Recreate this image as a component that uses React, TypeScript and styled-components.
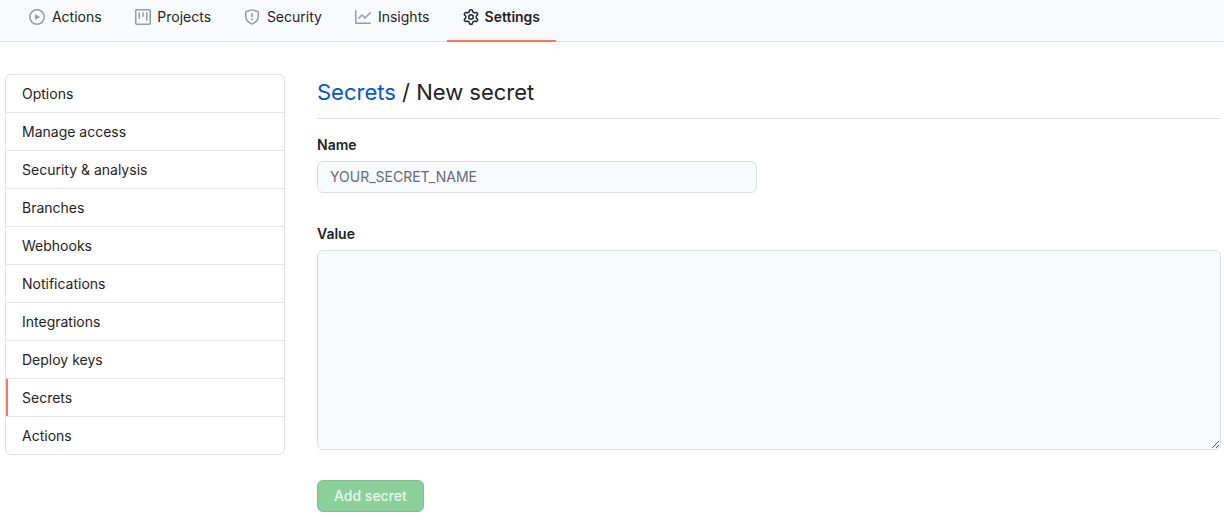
import React from "react";
import styled, { createGlobalStyle } from "styled-components";

const GlobalStyle = createGlobalStyle`
  *, *::before, *::after { box-sizing: border-box; }
  body {
    margin: 0;
    background: #ffffff;
    color: #1f2327;
    font-family: Inter, "Liberation Sans", sans-serif;
    font-size: 14px;
    line-height: 20px;
  }
`;

const icons = {
  play: "M1.5 8a6.5 6.5 0 1113 0 6.5 6.5 0 01-13 0zM8 0a8 8 0 100 16A8 8 0 008 0zM6.379 5.227A.25.25 0 006 5.442v5.117a.25.25 0 00.379.214l4.264-2.559a.25.25 0 000-.428L6.379 5.227z",
  project:
    "M1.75 0A1.75 1.75 0 000 1.75v12.5C0 15.216.784 16 1.75 16h12.5A1.75 1.75 0 0016 14.25V1.75A1.75 1.75 0 0014.25 0H1.75zM1.5 1.75a.25.25 0 01.25-.25h12.5a.25.25 0 01.25.25v12.5a.25.25 0 01-.25.25H1.75a.25.25 0 01-.25-.25V1.75zM11.75 3a.75.75 0 00-.75.75v7.5a.75.75 0 001.5 0v-7.5a.75.75 0 00-.75-.75zm-8.25.75a.75.75 0 011.5 0v5.5a.75.75 0 01-1.5 0v-5.5zM8 3a.75.75 0 00-.75.75v3.5a.75.75 0 001.5 0v-3.5A.75.75 0 008 3z",
  shield:
    "M7.467.133a1.75 1.75 0 011.066 0l5.25 1.68A1.75 1.75 0 0115 3.48V7c0 1.566-.32 3.182-1.303 4.682-.983 1.498-2.585 2.813-5.032 3.855a1.7 1.7 0 01-1.33 0c-2.447-1.042-4.049-2.357-5.032-3.855C1.32 10.182 1 8.566 1 7V3.48a1.75 1.75 0 011.217-1.667l5.25-1.68zm.61 1.429a.25.25 0 00-.153 0l-5.25 1.68a.25.25 0 00-.174.238V7c0 1.358.275 2.666 1.057 3.86.784 1.194 2.121 2.34 4.366 3.297a.2.2 0 00.154 0c2.245-.956 3.582-2.104 4.366-3.298C13.225 9.666 13.5 8.36 13.5 7V3.48a.25.25 0 00-.174-.237l-5.25-1.68zM9 10.5a1 1 0 11-2 0 1 1 0 012 0zm-.25-5.75a.75.75 0 10-1.5 0v3a.75.75 0 001.5 0v-3z",
  graph:
    "M1.5 1.75a.75.75 0 00-1.5 0v12.5c0 .414.336.75.75.75h14.5a.75.75 0 000-1.5H1.5V1.75zm14.28 2.53a.75.75 0 00-1.06-1.06L10 7.94 7.53 5.47a.75.75 0 00-1.06 0L3.22 8.72a.75.75 0 001.06 1.06L7 7.06l2.47 2.47a.75.75 0 001.06 0l5.25-5.25z",
  gear: "M7.429 1.525a6.593 6.593 0 011.142 0c.036.003.108.036.137.146l.289 1.105c.147.56.55.967.997 1.189.174.086.341.183.501.29.417.278.97.423 1.53.27l1.102-.303c.11-.03.175.016.195.046.219.31.41.641.573.989.014.031.022.11-.059.19l-.815.806c-.411.406-.562.957-.53 1.456a4.588 4.588 0 010 .582c-.032.499.119 1.05.53 1.456l.815.806c.08.08.073.159.059.19a6.494 6.494 0 01-.573.99c-.02.029-.086.074-.195.045l-1.103-.303c-.559-.153-1.112-.008-1.529.27-.16.107-.327.204-.5.29-.449.222-.851.628-.998 1.189l-.289 1.105c-.029.11-.101.143-.137.146a6.613 6.613 0 01-1.142 0c-.036-.003-.108-.037-.137-.146l-.289-1.105c-.147-.56-.55-.967-.997-1.189a4.502 4.502 0 01-.501-.29c-.417-.278-.97-.423-1.53-.27l-1.102.303c-.11.03-.175-.016-.195-.046a6.492 6.492 0 01-.573-.989c-.014-.031-.022-.11.059-.19l.815-.806c.411-.406.562-.957.53-1.456a4.587 4.587 0 010-.582c.032-.499-.119-1.05-.53-1.456l-.815-.806c-.08-.08-.073-.159-.059-.19a6.44 6.44 0 01.573-.99c.02-.029.086-.075.195-.045l1.103.303c.559.153 1.112.008 1.529-.27.16-.107.327-.204.5-.29.449-.222.851-.628.998-1.189l.289-1.105c.029-.11.101-.143.137-.146zM8 0c-.236 0-.47.01-.701.03-.743.065-1.29.615-1.458 1.261l-.29 1.106c-.017.066-.078.158-.211.224a5.994 5.994 0 00-.668.386c-.123.082-.233.09-.3.071L3.27 2.776c-.644-.177-1.392.02-1.82.63a7.977 7.977 0 00-.704 1.217c-.315.675-.111 1.422.363 1.891l.815.806c.05.048.098.147.088.294a6.084 6.084 0 000 .772c.01.147-.038.246-.088.294l-.815.806c-.474.469-.678 1.216-.363 1.891.2.428.436.835.704 1.218.428.609 1.176.806 1.82.63l1.103-.303c.066-.019.176-.011.299.071.213.143.436.272.668.386.133.066.194.158.212.224l.289 1.106c.169.646.715 1.196 1.458 1.26a8.094 8.094 0 001.402 0c.743-.064 1.29-.614 1.458-1.26l.29-1.106c.017-.066.078-.158.211-.224a5.98 5.98 0 00.668-.386c.123-.082.233-.09.3-.071l1.102.302c.644.177 1.392-.02 1.82-.63.268-.382.505-.789.704-1.217.315-.675.111-1.422-.364-1.891l-.814-.806c-.05-.048-.098-.147-.088-.294a6.1 6.1 0 000-.772c-.01-.147.039-.246.088-.294l.814-.806c.475-.469.679-1.216.364-1.891a7.992 7.992 0 00-.704-1.218c-.428-.609-1.176-.806-1.82-.63l-1.103.303c-.066.019-.176.011-.299-.071a5.991 5.991 0 00-.668-.386c-.133-.066-.194-.158-.212-.224L10.16 1.29C9.99.645 9.444.095 8.701.031A8.094 8.094 0 008 0zm1.5 8a1.5 1.5 0 11-3 0 1.5 1.5 0 013 0zM11 8a3 3 0 11-6 0 3 3 0 016 0z",
};

const TabBar = styled.nav`
  display: flex;
  padding-left: 13px;
  background: #f9fafc;
  box-shadow: inset 0 -1px 0 #dcdfe4;
`;

const Tab = styled.a<{ $active?: boolean }>`
  display: flex;
  align-items: center;
  gap: 6px;
  padding: 7px 16px 13px;
  border-bottom: 2px solid ${(p) => (p.$active ? "#f4775f" : "transparent")};
  color: inherit;
  font-weight: ${(p) => (p.$active ? 600 : 400)};
  text-decoration: none;
  white-space: nowrap;
`;

/* Reserves the width of the bold label, so that tabs keep their place when selected. */
const TabLabel = styled.span`
  display: flex;
  flex-direction: column;
  align-items: center;

  &::after {
    content: attr(data-label);
    height: 0;
    overflow: hidden;
    visibility: hidden;
    font-weight: 600;
  }
`;

const TabIcon = styled.svg<{ $active?: boolean }>`
  flex: none;
  width: 16px;
  height: 16px;
  fill: ${(p) => (p.$active ? "#24292e" : "#959da5")};
`;

const Page = styled.div`
  display: flex;
  align-items: flex-start;
  gap: 32px;
  padding: 32px 3px 10px 5px;
`;

const Menu = styled.nav`
  flex: none;
  width: 280px;
  overflow: hidden;
  border: 1px solid #dfe1e7;
  border-radius: 6px;
`;

const MenuItem = styled.a<{ $active?: boolean }>`
  display: block;
  padding: 9px 16px 8px;
  border-bottom: 1px solid #e4e6ea;
  box-shadow: ${(p) => (p.$active ? "inset 2px 0 0 #f4775f" : "none")};
  color: inherit;
  text-decoration: none;

  &:last-child {
    border-bottom: 0;
  }
`;

const Content = styled.main`
  flex: 1;
  min-width: 0;
`;

const Title = styled.h2`
  margin: 0 0 16px;
  padding: 2px 0 9px;
  border-bottom: 1px solid #dcdfe4;
  font-size: 22px;
  font-weight: 400;
  line-height: 33px;
`;

const TitleLink = styled.a`
  color: #0059d2;
  text-decoration: none;
`;

const Form = styled.form`
  display: flex;
  flex-direction: column;
  align-items: flex-start;
  gap: 30px;
`;

const Field = styled.div`
  display: flex;
  flex-direction: column;
  align-items: flex-start;
  gap: 6px;
  width: 100%;
`;

const Label = styled.label`
  font-weight: 600;
`;

const controlStyle = `
  border: 1px solid #dcdfe4;
  border-radius: 6px;
  background: #f9fafc;
  color: inherit;
  font: inherit;
`;

const TextInput = styled.input`
  ${controlStyle}
  width: 440px;
  max-width: 100%;
  height: 32px;
  margin-bottom: 1px;
  padding: 4px 12px 6px;

  &::placeholder { color: #646c76; opacity: 1; }
`;

const TextArea = styled.textarea`
  ${controlStyle}
  display: block;
  width: 100%;
  height: 200px;
  padding: 5px 12px;
  resize: vertical;
`;

const SubmitButton = styled.button`
  padding: 5px 16px;
  border: 1px solid #7dc08c;
  border-radius: 6px;
  background: #8bd09a;
  color: #e8f6eb;
  font: inherit;
  font-weight: 500;
`;

const tabs: { label: string; icon: keyof typeof icons; active?: boolean }[] = [
  { label: "Actions", icon: "play" },
  { label: "Projects", icon: "project" },
  { label: "Security", icon: "shield" },
  { label: "Insights", icon: "graph" },
  { label: "Settings", icon: "gear", active: true },
];

const menu = [
  "Options",
  "Manage access",
  "Security & analysis",
  "Branches",
  "Webhooks",
  "Notifications",
  "Integrations",
  "Deploy keys",
  "Secrets",
  "Actions",
];

export default function App() {
  return (
    <>
      <GlobalStyle />
      <TabBar aria-label="Repository">
        {tabs.map((t) => (
          <Tab key={t.label} href="#" $active={t.active} aria-current={t.active ? "page" : undefined}>
            <TabIcon viewBox="0 0 16 16" $active={t.active} aria-hidden="true">
              <path fillRule="evenodd" d={icons[t.icon]} />
            </TabIcon>
            <TabLabel data-label={t.label}>{t.label}</TabLabel>
          </Tab>
        ))}
      </TabBar>
      <Page>
        <Menu aria-label="Settings">
          {menu.map((item) => (
            <MenuItem key={item} href="#" $active={item === "Secrets"}>
              {item}
            </MenuItem>
          ))}
        </Menu>
        <Content>
          <Title>
            <TitleLink href="#">Secrets</TitleLink> / New secret
          </Title>
          <Form>
            <Field>
              <Label htmlFor="secret-name">Name</Label>
              <TextInput id="secret-name" type="text" placeholder="YOUR_SECRET_NAME" />
            </Field>
            <Field>
              <Label htmlFor="secret-value">Value</Label>
              <TextArea id="secret-value" />
            </Field>
            <SubmitButton type="submit" disabled>
              Add secret
            </SubmitButton>
          </Form>
        </Content>
      </Page>
    </>
  );
}
